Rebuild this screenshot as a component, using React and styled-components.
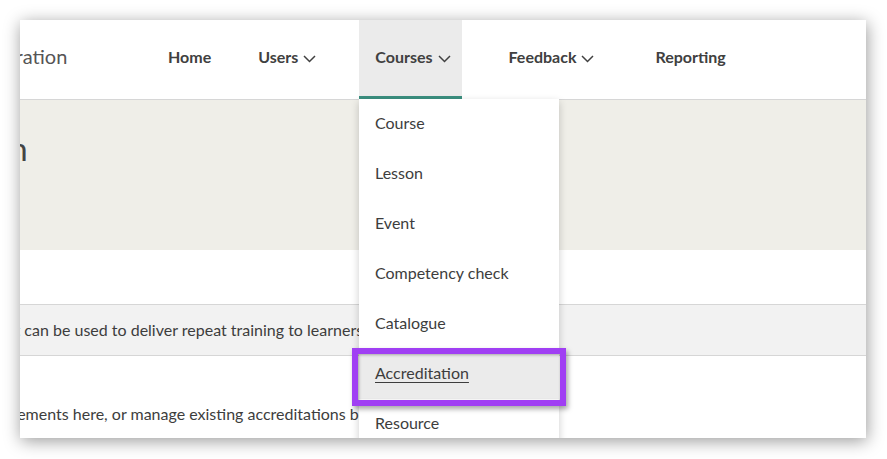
import React from "react";
import styled, { createGlobalStyle } from "styled-components";

const GlobalStyle = createGlobalStyle`
  html, body { margin: 0; padding: 0; background: #ffffff; }
  body { font-family: Lato, "Open Sans", "Liberation Sans", sans-serif; color: #3d3d3d; }
  * { box-sizing: border-box; }
`;

const Stage = styled.div`
  width: 887px;
  height: 459px;
  padding: 20px 21px 21px 20px;
  overflow: hidden;
`;

const Card = styled.div`
  position: relative;
  width: 846px;
  height: 418px;
  background: #ffffff;
  overflow: hidden;
  box-shadow: 1px 3px 16px rgba(0, 0, 0, 0.4);
  display: flex;
  flex-direction: column;
`;

const Header = styled.header`
  height: 80px;
  flex: none;
  display: flex;
  align-items: stretch;
  border-bottom: 1px solid #d6d6d6;
`;

const Brand = styled.div`
  width: 132px;
  flex: none;
  display: flex;
  align-items: center;
  padding-bottom: 7px;
  overflow: hidden;
  font-size: 20px;
  color: #555555;
  white-space: nowrap;
`;

const BrandText = styled.span`
  margin-left: -82px;
`;

const Nav = styled.nav`
  display: flex;
  align-items: stretch;
  gap: 31px;
`;

const NavItem = styled.div`
  display: flex;
  align-items: center;
  gap: 5px;
  padding: 0 ${(p) => (p.$chevron ? "11px" : "16px")} 3px 16px;
  margin-left: ${(p) => p.$ml || 0}px;
  margin-right: ${(p) => p.$mr || 0}px;
  font-size: 16px;
  font-weight: 700;
  color: #404040;
  background: ${(p) => (p.$active ? "#ebebeb" : "transparent")};
  border-bottom: 3px solid ${(p) => (p.$active ? "#3b8f7f" : "transparent")};
  white-space: nowrap;
`;

const Chevron = styled.svg`
  width: 13px;
  height: 8px;
  margin-top: 4px;
  flex: none;
`;

const Banner = styled.section`
  height: 150px;
  flex: none;
  background: #efeee8;
  padding-top: 28px;
  overflow: hidden;
`;

const Title = styled.h1`
  margin: 0 0 0 -186px;
  font-size: 33px;
  font-weight: 400;
  line-height: 40px;
  color: #444444;
  white-space: nowrap;
`;

const Row = styled.div`
  flex: none;
  height: ${(p) => p.$h}px;
  display: flex;
  align-items: ${(p) => (p.$bottom ? "flex-end" : "center")};
  padding-bottom: ${(p) => (p.$bottom ? "15px" : "2px")};
  background: ${(p) => (p.$gray ? "#f2f2f2" : "#ffffff")};
  border-top: ${(p) => (p.$gray ? "1px solid #d6d6d6" : "none")};
  border-bottom: ${(p) => (p.$gray ? "1px solid #d6d6d6" : "none")};
  overflow: hidden;
`;

const RowText = styled.p`
  margin: 0 0 0 ${(p) => p.$shift}px;
  font-size: 16px;
  color: #3d3d3d;
  white-space: nowrap;
`;

const Dropdown = styled.ul`
  position: absolute;
  left: 339px;
  top: 79px;
  width: 200px;
  margin: 0;
  padding: 0;
  list-style: none;
  background: #ffffff;
  box-shadow: 0 3px 8px rgba(0, 0, 0, 0.2);
`;

const DropItem = styled.li`
  height: 50px;
  display: flex;
  align-items: center;
  padding: 0 0 3px 16px;
  font-size: 16px;
  color: #3d3d3d;
  background: ${(p) => (p.$active ? "#ebebeb" : "#ffffff")};
  text-decoration: ${(p) => (p.$active ? "underline" : "none")};
  text-underline-offset: 3px;
`;

const Highlight = styled.div`
  position: absolute;
  left: 332px;
  top: 328px;
  width: 214px;
  height: 58px;
  border: 6px solid #a03ff3;
  box-shadow: 2px 3px 5px rgba(0, 0, 0, 0.35), inset 1px 1px 3px rgba(0, 0, 0, 0.3);
  pointer-events: none;
`;

const ChevronIcon = () => (
  <Chevron viewBox="0 0 13 8">
    <polyline points="1,1 6.5,6.5 12,1" fill="none" stroke="#404040" strokeWidth="1.5" />
  </Chevron>
);

const menu = [
  "Course",
  "Lesson",
  "Event",
  "Competency check",
  "Catalogue",
  "Accreditation",
  "Resource",
];

export default function App() {
  return (
    <>
      <GlobalStyle />
      <Stage>
        <Card>
          <Header>
            <Brand>
              <BrandText>Administration</BrandText>
            </Brand>
            <Nav>
              <NavItem $mr={-16}>Home</NavItem>
              <NavItem $chevron>
                Users <ChevronIcon />
              </NavItem>
              <NavItem $chevron $active $ml={1}>
                Courses <ChevronIcon />
              </NavItem>
              <NavItem $chevron>
                Feedback <ChevronIcon />
              </NavItem>
              <NavItem $ml={3}>Reporting</NavItem>
            </Nav>
          </Header>
          <Banner>
            <Title>Accreditation</Title>
          </Banner>
          <Row $h={54} />
          <Row $h={52} $gray>
            <RowText $shift={-28}>
              that can be used to deliver repeat training to learners over time.
            </RowText>
          </Row>
          <Row $h={82} $bottom>
            <RowText $shift={-44}>
              requirements here, or manage existing accreditations below.
            </RowText>
          </Row>
          <Dropdown>
            {menu.map((m) => (
              <DropItem key={m} $active={m === "Accreditation"}>
                {m}
              </DropItem>
            ))}
          </Dropdown>
          <Highlight />
        </Card>
      </Stage>
    </>
  );
}
